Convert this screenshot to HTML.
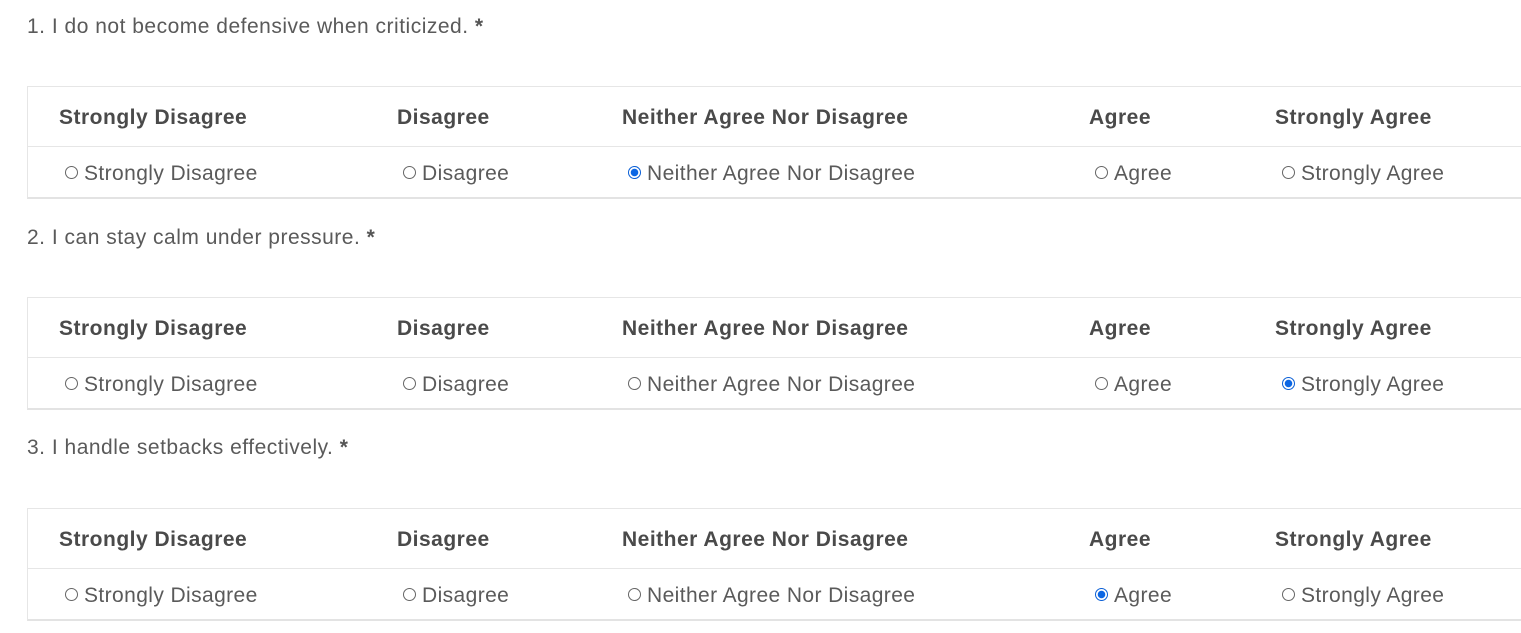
<!DOCTYPE html>
<html><head><style>
body{margin:0;width:1521px;height:633px;background:#fff;font-family:"Liberation Sans",sans-serif;color:#5a5a5a;position:relative;overflow:hidden}
.q{position:absolute;left:27px;font-size:21px;white-space:nowrap;letter-spacing:0.5px}
.q b{color:#555}
.t{position:absolute;left:27px;width:1600px;height:113px;border:1px solid #e6e6e6;border-bottom:2px solid #e3e3e3;box-sizing:border-box}
.t .hr{position:absolute;left:0;right:0;top:59px;border-top:1px solid #e6e6e6}
.h,.c{position:absolute;white-space:nowrap;font-size:21px}
.h{font-weight:bold;color:#4a4a4a;top:19px;letter-spacing:0.5px}
.c{top:75px;letter-spacing:0.4px}
.r{display:inline-block;width:13px;height:13px;border:1px solid #666;border-radius:50%;box-sizing:border-box;margin-right:6px;vertical-align:1px}
.r.on{border:1px solid #0a5fd6;background:radial-gradient(circle,#0b66e4 0 3.5px,#fff 4px)}
</style></head><body>
<div class="q" style="top:15px">1. I do not become defensive when criticized. <b>*</b></div>
<div class="q" style="top:226px">2. I can stay calm under pressure. <b>*</b></div>
<div class="q" style="top:436px">3. I handle setbacks effectively. <b>*</b></div>

<div class="t" style="top:86px"><div class="hr"></div>
<div class="h" style="left:31px">Strongly Disagree</div><div class="h" style="left:369px">Disagree</div><div class="h" style="left:594px">Neither Agree Nor Disagree</div><div class="h" style="left:1061px">Agree</div><div class="h" style="left:1247px">Strongly Agree</div>
<div class="c" style="left:37px"><span class="r"></span>Strongly Disagree</div><div class="c" style="left:375px"><span class="r"></span>Disagree</div><div class="c" style="left:600px"><span class="r on"></span>Neither Agree Nor Disagree</div><div class="c" style="left:1067px"><span class="r"></span>Agree</div><div class="c" style="left:1254px"><span class="r"></span>Strongly Agree</div>
</div>

<div class="t" style="top:297px"><div class="hr"></div>
<div class="h" style="left:31px">Strongly Disagree</div><div class="h" style="left:369px">Disagree</div><div class="h" style="left:594px">Neither Agree Nor Disagree</div><div class="h" style="left:1061px">Agree</div><div class="h" style="left:1247px">Strongly Agree</div>
<div class="c" style="left:37px"><span class="r"></span>Strongly Disagree</div><div class="c" style="left:375px"><span class="r"></span>Disagree</div><div class="c" style="left:600px"><span class="r"></span>Neither Agree Nor Disagree</div><div class="c" style="left:1067px"><span class="r"></span>Agree</div><div class="c" style="left:1254px"><span class="r on"></span>Strongly Agree</div>
</div>

<div class="t" style="top:508px"><div class="hr"></div>
<div class="h" style="left:31px">Strongly Disagree</div><div class="h" style="left:369px">Disagree</div><div class="h" style="left:594px">Neither Agree Nor Disagree</div><div class="h" style="left:1061px">Agree</div><div class="h" style="left:1247px">Strongly Agree</div>
<div class="c" style="left:37px"><span class="r"></span>Strongly Disagree</div><div class="c" style="left:375px"><span class="r"></span>Disagree</div><div class="c" style="left:600px"><span class="r"></span>Neither Agree Nor Disagree</div><div class="c" style="left:1067px"><span class="r on"></span>Agree</div><div class="c" style="left:1254px"><span class="r"></span>Strongly Agree</div>
</div>
</body></html>
